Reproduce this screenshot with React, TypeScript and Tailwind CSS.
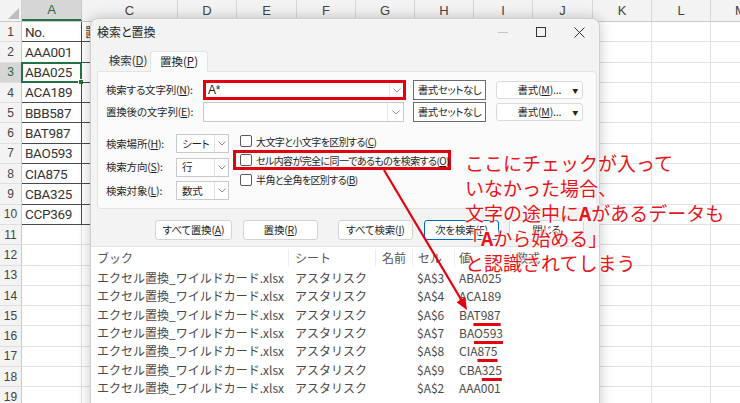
import React from "react";

const COLS = [
  { label: "A", w: "w-[60px]" },
  { label: "C", w: "w-[96px]" },
  { label: "D", w: "w-[59px]" },
  { label: "E", w: "w-[60px]" },
  { label: "F", w: "w-[59px]" },
  { label: "G", w: "w-[59px]" },
  { label: "H", w: "w-[59px]" },
  { label: "I", w: "w-[59px]" },
  { label: "J", w: "w-[60px]" },
  { label: "K", w: "w-[59px]" },
  { label: "L", w: "w-[59px]" },
  { label: "M", w: "w-[60px]" },
];

const CELLS = ["No.", "AAA001", "ABA025", "ACA189", "BBB587", "BAT987", "BAO593", "CIA875", "CBA325", "CCP369"];

const RESULTS: { cell: string; pre: string; mark: string }[] = [
  { cell: "$A$3", pre: "ABA025", mark: "" },
  { cell: "$A$4", pre: "ACA189", mark: "" },
  { cell: "$A$6", pre: "BA", mark: "T987" },
  { cell: "$A$7", pre: "BA", mark: "O593" },
  { cell: "$A$8", pre: "CIA", mark: "875" },
  { cell: "$A$9", pre: "CBA", mark: "325" },
  { cell: "$A$2", pre: "AAA001", mark: "" },
];

const jp = "font-['Noto_Sans_CJK_JP',sans-serif]";

function Chevron() {
  return (
    <svg width="8" height="5" viewBox="0 0 8 5">
      <path d="M0.5 0.5 L4 4 L7.5 0.5" fill="none" stroke="#8a8a8a" strokeWidth="1" />
    </svg>
  );
}

function Sheet() {
  const rows = Array.from({ length: 19 }, (_, i) => i + 1);
  return (
    <div className="flex flex-col font-['Liberation_Sans',sans-serif]">
      <div className="flex h-[22px] bg-[#f3f3f3] border-b border-[#c9c9c9]">
        <div className="w-[22px] shrink-0 border-r border-[#d0d0d0] flex items-end justify-end p-[2px]">
          <svg width="11" height="11" viewBox="0 0 11 11">
            <polygon points="11,0 11,11 0,11" fill="#bdbdbd" />
          </svg>
        </div>
        {COLS.map((c, i) => (
          <div
            key={c.label}
            className={`${c.w} shrink-0 flex items-center justify-center text-[13px] border-r ${
              i === 0
                ? "bg-[#d6d6d6] text-[#1e6b3c] border-b-2 border-b-[#217346] border-r-[#c9c9c9]"
                : "text-[#444] border-[#d6d6d6]"
            }`}
          >
            {c.label}
          </div>
        ))}
      </div>
      {rows.map((r) => (
        <div key={r} className="flex h-[20.3px]">
          <div
            className={`w-[22px] shrink-0 flex items-center justify-center text-[12px] border-r border-b border-r-[#c9c9c9] border-b-[#dedede] ${
              r === 3 ? "bg-[#d6d6d6] text-[#1e6b3c]" : "bg-[#f3f3f3] text-[#444]"
            }`}
          >
            {r}
          </div>
          {COLS.map((c, i) => {
            const framed = i === 0 && r <= 10;
            return (
              <div
                key={c.label}
                className={`${c.w} shrink-0 relative flex items-center border-r border-b ${
                  framed
                    ? "border-[#4a4a4a]"
                    : i === 1 && r <= 10
                    ? "border-b-[#4a4a4a] border-r-[#e1e1e1]"
                    : "border-[#e1e1e1]"
                }`}
              >
                {i === 0 && r <= 10 && (
                  <span className="pl-[3px] text-[13.5px] text-[#333] font-['Roboto',sans-serif] tracking-[-0.3px]">
                    {CELLS[r - 1]}
                  </span>
                )}
                {i === 1 && r === 1 && <span className={`pl-[3px] text-[12px] text-[#333] ${jp}`}>置換前</span>}
                {i === 0 && r === 3 && (
                  <>
                    <div className="absolute -inset-[1px] border-2 border-[#217346]" />
                    <div className="absolute -right-[3px] -bottom-[3px] w-[6px] h-[6px] bg-[#217346] border border-white" />
                  </>
                )}
              </div>
            );
          })}
        </div>
      ))}
    </div>
  );
}

function Select({ value }: { value: string }) {
  return (
    <div className="w-[53px] h-[19px] flex bg-white border border-[#c9c9c9]">
      <div className="flex-1 flex items-center pl-[5px] whitespace-nowrap">{value}</div>
      <div className="w-[14px] border-l border-[#e0e0e0] flex items-center justify-center">
        <Chevron />
      </div>
    </div>
  );
}

function FormatButton({ ml }: { ml: string }) {
  return (
    <div
      className={`${ml} w-[87px] h-[18px] flex items-center justify-end pr-[4px] bg-white border border-[#dadada] rounded-[3px] whitespace-nowrap`}
    >
      <span>
        書式(<span className="underline">M</span>)...
      </span>
      <span className="ml-[11px] text-[6px] text-[#222]">▼</span>
    </div>
  );
}

function ClearButton({ ml }: { ml: string }) {
  return (
    <div
      className={`${ml} w-[73px] h-[20px] flex items-center justify-center bg-white border-[1.5px] border-[#6b6b6b] whitespace-nowrap text-[10.5px] tracking-[-0.4px]`}
    >
      書式セットなし
    </div>
  );
}

function Checkbox() {
  return <div className="w-[12px] h-[12px] shrink-0 bg-white border border-[#5a5a5a] rounded-[2px]" />;
}

function Dialog() {
  return (
    <div
      className={`absolute left-[90px] top-[18px] w-[510px] h-[400px] flex flex-col rounded-t-[8px] bg-[#f3f3f3] border border-[#cfcfcf] shadow-[0_0_14px_rgba(0,0,0,0.22)] text-[10.5px] tracking-[-0.2px] text-[#1f1f1f] ${jp} [font-feature-settings:'palt']`}
    >
      <div className="h-[26px] flex items-center">
        <span className="pl-[6px] text-[12px] tracking-normal">検索と置換</span>
        <div className="ml-auto flex h-full">
          <div className="w-[38px] flex items-center justify-center">
            <div className="w-[10px] h-px bg-[#c4c4c4]" />
          </div>
          <div className="w-[38px] flex items-center justify-center">
            <div className="w-[10px] h-[10px] border border-[#333]" />
          </div>
          <div className="w-[38px] flex items-center justify-center">
            <svg width="11" height="11" viewBox="0 0 11 11">
              <path d="M0.5 0.5 L10.5 10.5 M10.5 0.5 L0.5 10.5" stroke="#333" strokeWidth="1" />
            </svg>
          </div>
          <div className="w-[1px]" />
        </div>
      </div>

      <div className="mt-[6px] h-[20px] flex pl-[15px] text-[11.5px] tracking-normal">
        <div className="w-[44px] flex items-center justify-center text-[#333]">
          検索(<span className="underline">D</span>)
        </div>
        <div className="relative z-10 -mb-px w-[58px] flex items-center justify-center bg-[#fbfbfb] border border-b-0 border-[#e3e3e3] rounded-t-[3px]">
          置換(<span className="underline">P</span>)
        </div>
      </div>

      <div className="ml-[6px] w-[500px] h-[138px] bg-[#fbfbfb] border border-[#e3e3e3] rounded-[4px] rounded-tl-none pl-[8px] pt-[8px] flex flex-col">
        <div className="flex items-center h-[20px]">
          <div className="w-[97px] whitespace-nowrap">
            検索する文字列(<span className="underline">N</span>):
          </div>
          <div className="w-[203px] h-[20px] flex bg-white border-[3px] border-[#e3000f]">
            <div className="flex-1 flex items-center pl-[2px] font-['Liberation_Sans',sans-serif] text-[12px]">A*</div>
            <div className="w-[14px] border-l border-[#ececec] flex items-center justify-center">
              <Chevron />
            </div>
          </div>
          <ClearButton ml="ml-[7px]" />
          <FormatButton ml="ml-[10px]" />
        </div>
        <div className="mt-[2px] flex items-center h-[20px]">
          <div className="w-[97px] whitespace-nowrap">
            置換後の文字列(<span className="underline">E</span>):
          </div>
          <div className="w-[201px] h-[20px] flex bg-white border border-[#c9c9c9]">
            <div className="flex-1" />
            <div className="w-[16px] border-l border-[#e6e6e6] flex items-center justify-center">
              <Chevron />
            </div>
          </div>
          <ClearButton ml="ml-[9px]" />
          <FormatButton ml="ml-[10px]" />
        </div>

        <div className="mt-[12px] flex">
          <div className="w-[127px] flex flex-col gap-[4.5px]">
            <div className="flex items-center h-[19px]">
              <div className="w-[70px] whitespace-nowrap">
                検索場所(<span className="underline">H</span>):
              </div>
              <Select value="シート" />
            </div>
            <div className="flex items-center h-[19px]">
              <div className="w-[70px] whitespace-nowrap">
                検索方向(<span className="underline">S</span>):
              </div>
              <Select value="行" />
            </div>
            <div className="flex items-center h-[19px]">
              <div className="w-[70px] whitespace-nowrap">
                検索対象(<span className="underline">L</span>):
              </div>
              <Select value="数式" />
            </div>
          </div>
          <div className="-mt-[2px] flex flex-col whitespace-nowrap text-[10px] tracking-[-0.6px]">
            <div className="h-[18px] flex items-center pl-[7px]">
              <Checkbox />
              <span className="ml-[4px]">
                大文字と小文字を区別する(<span className="underline">C</span>)
              </span>
            </div>
            <div className="w-[218px] h-[20px] flex items-center pl-[4px] border-[3px] border-[#e3000f]">
              <Checkbox />
              <span className="ml-[4px]">
                セル内容が完全に同一であるものを検索する(<span className="underline">O</span>)
              </span>
            </div>
            <div className="h-[19px] flex items-center pl-[7px]">
              <Checkbox />
              <span className="ml-[4px]">
                半角と全角を区別する(<span className="underline">B</span>)
              </span>
            </div>
          </div>
        </div>
      </div>

      <div className="mt-[11px] h-[20px] flex pl-[64px] whitespace-nowrap">
        <div className="w-[77px] flex items-center justify-center bg-white border border-[#d3d3d3] rounded-[3px]">
          すべて置換(<span className="underline">A</span>)
        </div>
        <div className="ml-[11px] w-[75px] flex items-center justify-center bg-white border border-[#d3d3d3] rounded-[3px]">
          置換(<span className="underline">R</span>)
        </div>
        <div className="ml-[20px] w-[75px] flex items-center justify-center bg-white border border-[#d3d3d3] rounded-[3px]">
          すべて検索(<span className="underline">I</span>)
        </div>
        <div className="ml-[11px] w-[75px] flex items-center justify-center bg-white border border-[#0067c0] rounded-[3px]">
          次を検索(<span className="underline">F</span>)
        </div>
        <div className="ml-[10px] w-[75px] flex items-center justify-center bg-white border border-[#d3d3d3] rounded-[3px]">
          閉じる
        </div>
      </div>

      <div className="mt-[6px] flex-1 bg-white border-t border-[#e3e3e3] text-[12px] tracking-normal text-[#4a4a4a] [font-feature-settings:normal] whitespace-nowrap">
        <div className="h-[22px] flex items-center text-[#555]">
          <div className="w-[198px] pl-[6px] border-r border-[#ededed]">ブック</div>
          <div className="w-[87px] pl-[6px] border-r border-[#ededed]">シート</div>
          <div className="w-[37px] pl-[6px] border-r border-[#ededed]">名前</div>
          <div className="w-[42px] pl-[5px] border-r border-[#ededed]">セル</div>
          <div className="w-[56px] pl-[4px] border-r border-[#ededed]">値</div>
          <div className="flex-1 pl-[5px]">数式</div>
        </div>
        {RESULTS.map((r) => (
          <div key={r.cell} className="h-[18.3px] flex items-center">
            <div className="w-[198px] shrink-0 pl-[6px]">エクセル置換_ワイルドカード.xlsx</div>
            <div className="w-[87px] shrink-0 pl-[6px]">アスタリスク</div>
            <div className="w-[37px] shrink-0" />
            <div className="w-[42px] shrink-0 pl-[4px]">{r.cell}</div>
            <div className="w-[56px] shrink-0 pl-[4px]">
              {r.pre}
              {r.mark && (
                <span className="underline decoration-[#e3000f] decoration-[2.5px] underline-offset-[3px]">{r.mark}</span>
              )}
            </div>
          </div>
        ))}
      </div>
    </div>
  );
}

function Annotation() {
  return (
    <div
      className={`absolute left-[465px] top-[150px] text-[19px] leading-[25px] text-[#e8141b] whitespace-nowrap ${jp} [text-shadow:0_0_2px_#fff,0_0_2px_#fff,0_0_3px_#fff,0_0_3px_#fff]`}
    >
      <div>ここにチェックが入って</div>
      <div>いなかった場合、</div>
      <div>
        文字の途中に<span className="font-bold">A</span>があるデータも
      </div>
      <div className="-ml-[3px]">
        「<span className="font-bold">A</span>から始める」
      </div>
      <div>と認識されてしまう</div>
    </div>
  );
}

function Arrow() {
  return (
    <svg className="absolute inset-0 pointer-events-none" width="740" height="403" viewBox="0 0 740 403">
      <line x1="384" y1="170" x2="462" y2="301" stroke="#e3000f" strokeWidth="2.2" />
      <polygon points="467,310 456.6,302.3 465.2,297.1" fill="#e3000f" />
    </svg>
  );
}

export default function App() {
  return (
    <div className="relative w-[740px] h-[403px] overflow-hidden bg-white">
      <Sheet />
      <Dialog />
      <Arrow />
      <Annotation />
    </div>
  );
}
